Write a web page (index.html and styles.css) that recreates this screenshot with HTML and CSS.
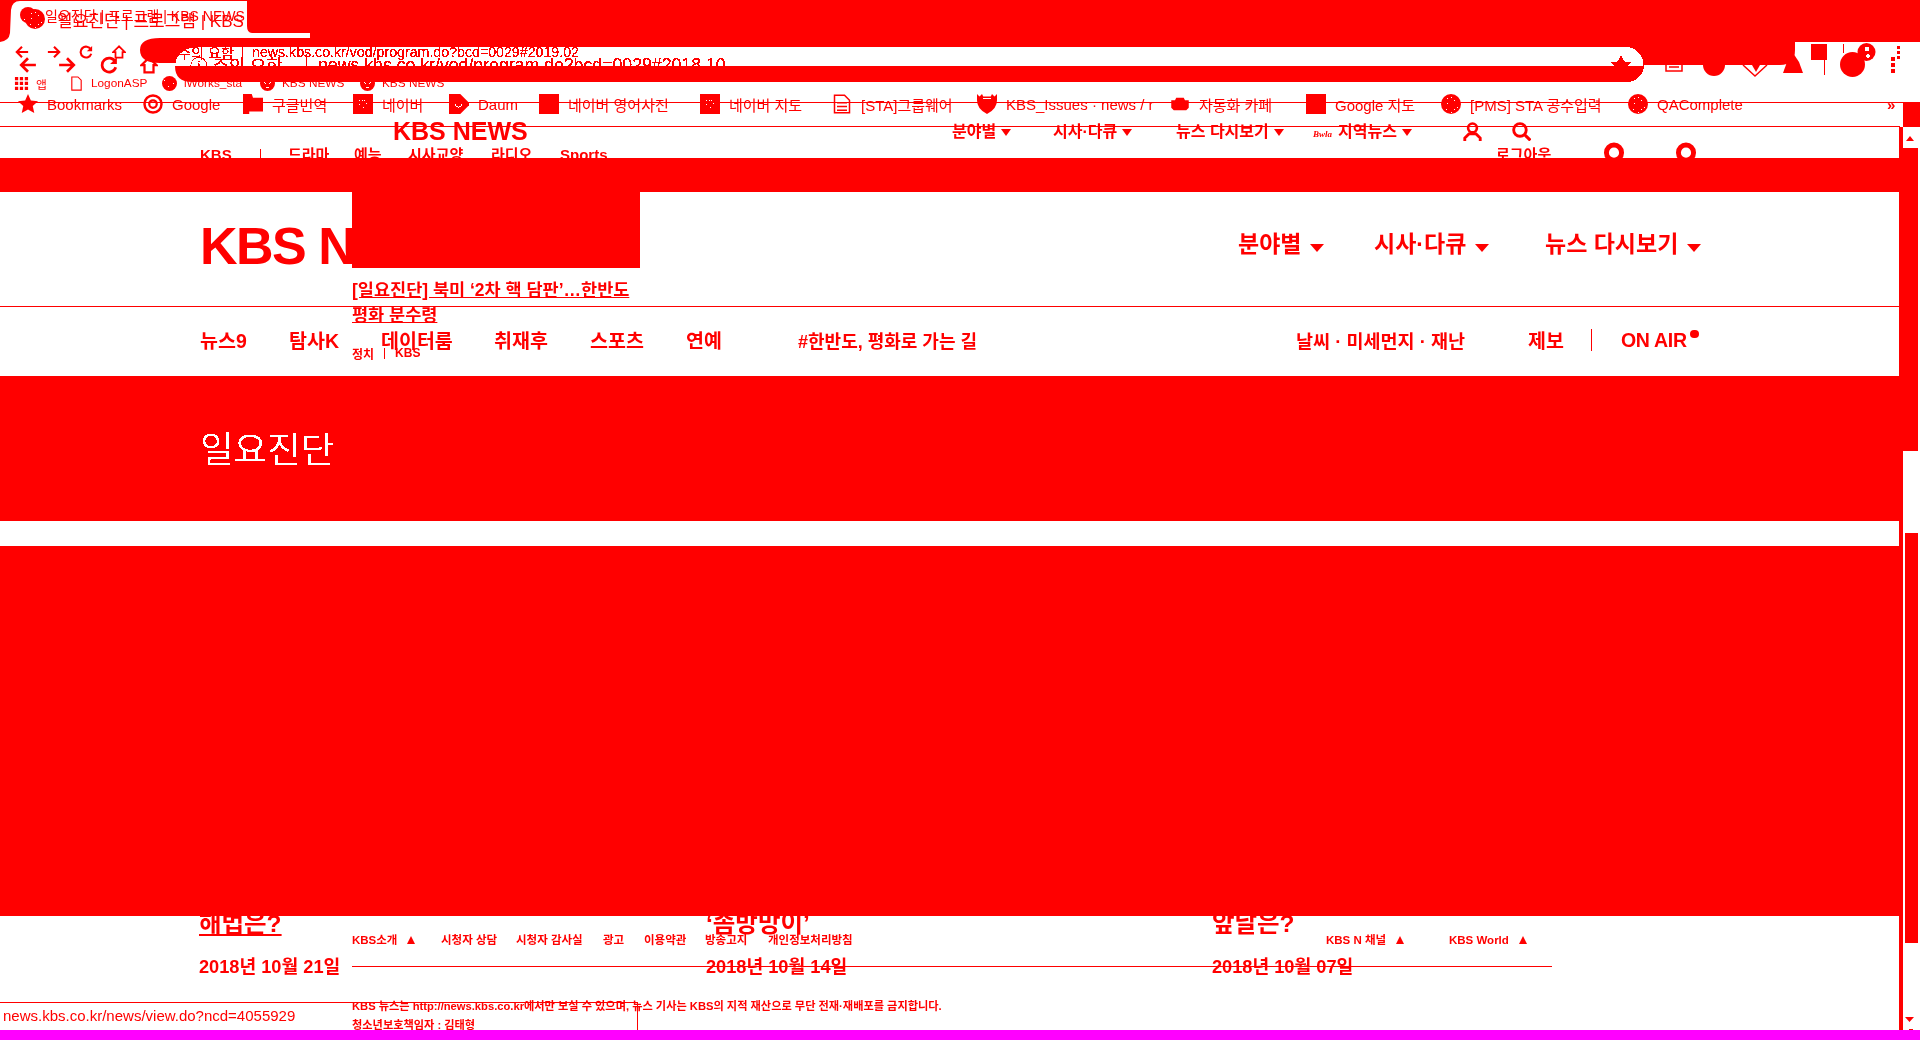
FILE: index.html
```html
<!DOCTYPE html>
<html lang="ko">
<head>
    <meta charset="UTF-8">
    <title>일요진단 | 프로그램 | KBS NEWS</title>
    <link rel="stylesheet" href="styles.css">
</head>
<body>
<svg class="defs" width="0" height="0">
    <filter id="binary" color-interpolation-filters="sRGB" x="0" y="0" width="100%" height="100%">
        <feComponentTransfer>
            <feFuncG type="discrete" tableValues="0 0 1"/>
            <feFuncB type="discrete" tableValues="0 0 1"/>
        </feComponentTransfer>
    </filter>
    <symbol id="i-back" viewBox="0 0 16 16"><path d="M15 8H2M8 2L2 8l6 6" fill="none" stroke="#f00" stroke-width="2.4"/></symbol>
    <symbol id="i-fwd" viewBox="0 0 16 16"><path d="M1 8h13M8 2l6 6-6 6" fill="none" stroke="#f00" stroke-width="2.4"/></symbol>
    <symbol id="i-reload" viewBox="0 0 16 16"><path d="M13.5 5A6.2 6.2 0 1 0 14 10" fill="none" stroke="#f00" stroke-width="2.4"/><path d="M15 1v6H9z" fill="#f00"/></symbol>
    <symbol id="i-home" viewBox="0 0 16 16"><path d="M8 1.5L1.5 8H4v6.5h8V8h2.5z" fill="none" stroke="#f00" stroke-width="2"/></symbol>
    <symbol id="i-apps" viewBox="0 0 16 16"><path d="M1 1h3.5v3.5H1zM6.2 1h3.5v3.5H6.2zM11.5 1H15v3.5h-3.5zM1 6.2h3.5v3.5H1zM6.2 6.2h3.5v3.5H6.2zM11.5 6.2H15v3.5h-3.5zM1 11.5h3.5V15H1zM6.2 11.5h3.5V15H6.2zM11.5 11.5H15V15h-3.5z" fill="#f00"/></symbol>
    <symbol id="i-file" viewBox="0 0 16 16"><path d="M3 1h6.5L13 4.5V15H3z" fill="none" stroke="#f00" stroke-width="1.2"/></symbol>
    <symbol id="i-doc" viewBox="0 0 16 16"><path d="M2 1h8l4 4v10H2zM4 7h8M4 10h8M4 13h8" fill="none" stroke="#f00" stroke-width="1.2"/></symbol>
    <symbol id="i-star" viewBox="0 0 16 16"><path d="M8 0l2.3 5.2 5.7.6-4.2 3.8 1.2 5.6L8 12.4l-5 2.8 1.2-5.6L0 5.8l5.7-.6z" fill="#f00"/></symbol>
    <symbol id="i-ring" viewBox="0 0 16 16"><circle cx="8" cy="8" r="6.8" fill="none" stroke="#f00" stroke-width="2"/><circle cx="8" cy="8" r="3" fill="none" stroke="#f00" stroke-width="1.8"/></symbol>
    <symbol id="i-folder" viewBox="0 0 16 16"><path d="M0 0h7l1 3h8v11H5v2H0z" fill="#f00"/></symbol>
    <symbol id="i-naver" viewBox="0 0 16 16"><path d="M0 0h16v16H0z" fill="#f00"/><path d="M5 5h6v6H5z" fill="none" stroke="#fff" stroke-dasharray="1 1"/></symbol>
    <symbol id="i-daum" viewBox="0 0 16 16"><path d="M0 0h9l7 7v2l-7 7H0z" fill="#f00"/><path d="M5 8a2.5 2.5 0 0 0 5 0" fill="none" stroke="#fff"/></symbol>
    <symbol id="i-square" viewBox="0 0 16 16"><path d="M0 0h16v16H0z" fill="#f00"/></symbol>
    <symbol id="i-crest" viewBox="0 0 16 16"><path d="M0 5V0l2 2 2-2 1 2h6l1-2 2 2 2-2v5q0 7-8 11Q0 12 0 5z" fill="#f00"/><path d="M5 3.5h6" stroke="#fff"/></symbol>
    <symbol id="i-cup" viewBox="0 0 16 16"><path d="M1 5h3l1-2h6l1 2h3v6l-2 2H3l-2-2z" fill="#f00"/><path d="M2 8h12" stroke="#fff"/></symbol>
    <symbol id="i-globe" viewBox="0 0 16 16"><circle cx="8" cy="8" r="8" fill="#f00"/><path d="M4 6l3 3M12 6L9 9M6 12h4" stroke="#fff"/></symbol>
    <symbol id="i-dotball" viewBox="0 0 16 16"><circle cx="8" cy="8" r="8" fill="#f00"/><path d="M2 5l9-3M2 9l12-5M4 13l10-6M8 15l6-5" stroke="#fff" stroke-dasharray="1 2"/></symbol>
    <symbol id="i-user" viewBox="0 0 16 16"><circle cx="8" cy="5" r="3.7" fill="none" stroke="#f00" stroke-width="2.2"/><path d="M1.5 16v-2.5L5 10h6l3.5 3.5V16" fill="none" stroke="#f00" stroke-width="2.4"/></symbol>
    <symbol id="i-search" viewBox="0 0 16 16"><circle cx="6.7" cy="6.7" r="5.3" fill="none" stroke="#f00" stroke-width="2.4"/><path d="M10.5 10.5L15.5 15.5" stroke="#f00" stroke-width="2.6"/></symbol>
    <symbol id="i-pin" viewBox="0 0 16 16"><circle cx="8" cy="7" r="5.5" fill="none" stroke="#f00" stroke-width="3.6"/></symbol>
</svg>

<div class="stage">
    <!-- silhouette of the browser frame and the scrollbar -->
    <svg class="backdrop" viewBox="0 0 1920 1040" width="1920" height="1040">
        <path fill="#f00" d="M0 0H247V1H20Q12 1 11 10L10 33Q9 41 0 42Z"/>
        <path fill="#f00" d="M160 38H310V33H252Q247 33 247 26V0H1920V42H1795V50Q1795 65 1780 65H1644V82H192Q175 82 175 66V63H160Q140 63 140 50Q140 38 160 38Z"/>
        <path fill="#fff" d="M200 47H1626A17.5 17.5 0 0 1 1643.500 64.500V66H175Q176 47 200 47Z"/>
        <path fill="#fff" d="M1644 66V64.500A17.500 17.500 0 0 1 1626 82H1644Z"/>
        <path fill="#f00" d="M0 102H1903V103H0ZM0 126H1900V127H0ZM1903 102H1920V127H1903ZM0 158H1918V192H0ZM352 192H640V268H352Z"/>
        <path fill="#f00" d="M1899 127H1903V1030H1899ZM1903 148H1918V451H1903ZM1905 533H1918V943H1905Z"/>
        <path fill="#f00" d="M1906 141L1910 136L1914 141ZM1905 1017H1914L1909.500 1022ZM1909 1029H1913V1030H1909Z"/>
        <!-- extension icons under the band -->
        <path fill="none" stroke="#f00" stroke-width="1.500" d="M1666 64V71H1682V64M1669 67H1679"/>
        <path fill="#f00" d="M1703 65H1725A11 11 0 0 1 1703 65Z"/>
        <path fill="none" stroke="#f00" stroke-width="1.500" d="M1743 65L1755 76L1767 65"/>
        <path fill="#f00" d="M1752 65H1760L1756 72Z"/>
        <path fill="#f00" d="M1793 53L1799 62L1803 73H1783L1787 62Z"/>
        <path fill="#f00" d="M1811 44H1827V60H1825V75H1824V60H1811Z"/>
        <path fill="#f00" d="M1843 44H1844V53H1843Z"/>
        <circle fill="#f00" cx="1852.500" cy="64.500" r="12.500"/>
        <circle fill="#f00" cx="1866.500" cy="52" r="9"/>
        <circle fill="#fff" cx="1867" cy="49" r="2.500"/>
        <circle fill="#fff" cx="1868" cy="56" r="2"/>
        <path fill="#f00" d="M1897 46H1900V49H1897ZM1897 51H1900V54H1897ZM1897 56H1900V59H1897ZM1891 57H1895V61H1891ZM1891 63H1895V67H1891ZM1891 69H1895V73H1891Z"/>
    </svg>

    <!-- upper exposure of the page -->
    <div class="view view-a">
        <div class="tab-a"><svg class="ico-fav-a"><use href="#i-dotball"/></svg><span>일요진단 | 프로그램 | KBS NEWS</span></div>
        <div class="tool tool-a">
            <svg><use href="#i-back"/></svg><svg><use href="#i-fwd"/></svg><svg><use href="#i-reload"/></svg><svg><use href="#i-home"/></svg>
            <span class="warn">주의 요함</span><i class="sep"></i><span class="url">news.kbs.co.kr/vod/program.do?bcd=0029#2019.02</span>
        </div>
        <div class="marks marks-a">
            <a><svg><use href="#i-apps"/></svg>앱</a>
            <a><svg><use href="#i-file"/></svg>LogonASP</a>
            <a><svg><use href="#i-dotball"/></svg>iWorks_sta</a>
            <a><svg><use href="#i-globe"/></svg>KBS NEWS</a>
            <a><svg><use href="#i-globe"/></svg>KBS NEWS</a>
        </div>
        <div class="head-a">
            <b class="logo-a">KBS NEWS</b>
            <a>분야별<i class="caret"></i></a>
            <a>시사·다큐<i class="caret"></i></a>
            <a>뉴스 다시보기<i class="caret"></i></a>
            <a><em class="bwla">Bwla</em>지역뉴스<i class="caret"></i></a>
            <svg class="ico-head"><use href="#i-user"/></svg>
            <svg class="ico-head"><use href="#i-search"/></svg>
        </div>
        <div class="sub-a">
            <a>KBS</a><i class="sep"></i><a>드라마</a><a>예능</a><a>시사교양</a><a>라디오</a><a>Sports</a>
            <a>로그아웃</a>
            <svg class="ico-pin"><use href="#i-pin"/></svg>
            <svg class="ico-pin"><use href="#i-pin"/></svg>
        </div>
        <div class="article-a">
            <a class="article-title">[일요진단] 북미 ‘2차 핵 담판’…한반도<br>평화 분수령</a>
            <p class="article-meta"><span>정치</span><i class="sep"></i><span>KBS</span></p>
        </div>
        <div class="foot">
            <div class="foot-links">
                <a>KBS소개<i class="up"></i></a><a>시청자 상담</a><a>시청자 감사실</a><a>광고</a><a>이용약관</a><a>방송고지</a><a>개인정보처리방침</a>
                <a>KBS N 채널<i class="up"></i></a><a>KBS World<i class="up"></i></a>
            </div>
            <p class="copy">KBS 뉴스는 http://news.kbs.co.kr에서만 보실 수 있으며, 뉴스 기사는 KBS의 지적 재산으로 무단 전재·재배포를 금지합니다.</p>
            <p class="copy copy-2">청소년보호책임자 : 김태형</p>
        </div>
    </div>

    <!-- lower exposure of the page -->
    <div class="view view-b">
        <div class="tab-b"><svg class="ico-fav-b"><use href="#i-dotball"/></svg><span>일요진단 | 프로그램 | KBS NEWS</span></div>
        <div class="tool tool-b">
            <svg><use href="#i-back"/></svg><svg><use href="#i-fwd"/></svg><svg><use href="#i-reload"/></svg><svg><use href="#i-home"/></svg>
            <span class="warn">ⓘ 주의 요함</span><i class="sep"></i><span class="url">news.kbs.co.kr/vod/program.do?bcd=0029#2018.10</span>
            <svg class="ico-bookmark"><use href="#i-star"/></svg>
        </div>
        <div class="marks marks-b">
            <a><svg><use href="#i-star"/></svg>Bookmarks</a>
            <a><svg><use href="#i-ring"/></svg>Google</a>
            <a><svg><use href="#i-folder"/></svg>구글번역</a>
            <a><svg><use href="#i-naver"/></svg>네이버</a>
            <a><svg><use href="#i-daum"/></svg>Daum</a>
            <a><svg><use href="#i-square"/></svg>네이버 영어사전</a>
            <a><svg><use href="#i-naver"/></svg>네이버 지도</a>
            <a><svg><use href="#i-doc"/></svg>[STA]그룹웨어</a>
            <a><svg><use href="#i-crest"/></svg>KBS_Issues · news / r</a>
            <a><svg><use href="#i-cup"/></svg>자동화 카페</a>
            <a><svg><use href="#i-square"/></svg>Google 지도</a>
            <a><svg><use href="#i-dotball"/></svg>[PMS] STA 공수입력</a>
            <a><svg><use href="#i-dotball"/></svg>QAComplete</a>
            <a class="more">»</a>
        </div>
        <div class="head-b">
            <b class="logo-b">KBS N</b>
            <a>분야별<i class="caret"></i></a>
            <a>시사·다큐<i class="caret"></i></a>
            <a>뉴스 다시보기<i class="caret"></i></a>
        </div>
        <div class="nav-b">
            <a>뉴스9</a><a>탐사K</a><a>데이터룸</a><a>취재후</a><a>스포츠</a><a>연예</a>
            <a class="nav-tag">#한반도, 평화로 가는 길</a>
            <a>날씨 · 미세먼지 · 재난</a><a>제보</a><i class="sep"></i><a class="onair">ON AIR<i class="dot"></i></a>
        </div>
        <div class="title-band"><h1>일요진단</h1></div>
        <div class="content-band"></div>
        <div class="cards-title">
            <a class="hover">해법은?</a><a>‘솜방망이’</a><a>앞날은?</a>
        </div>
        <div class="cards-date">
            <span>2018년 10월 21일</span><span>2018년 10월 14일</span><span>2018년 10월 07일</span>
        </div>
    </div>

    <div class="bottom">
        <div class="status">news.kbs.co.kr/news/view.do?ncd=4055929</div>
        <div class="strip"></div>
    </div>
</div>
</body>
</html>
```

FILE: styles.css
```css
* { box-sizing: border-box; }

body {
    margin: 0;
    background: #fff;
    color: #f00;
    font-family: "Liberation Sans", "Noto Sans CJK KR", sans-serif;
    overflow: hidden;
}

a { color: inherit; white-space: nowrap; }
em, i { font-style: normal; }
p, h1 { margin: 0; }

.defs { display: block; height: 0; }

.stage {
    display: grid;
    width: 1920px;
    height: 1040px;
    overflow: hidden;
    filter: url(#binary);
}
.stage > * { grid-area: 1 / 1; }
.backdrop { display: block; }

.view { display: flex; flex-direction: column; min-width: 0; }

/* tabs */
.tab-a, .tab-b {
    display: flex;
    align-items: center;
    width: 247px;
    overflow: hidden;
    white-space: nowrap;
}
.tab-a { height: 30px; padding-left: 20px; gap: 9px; font-size: 14px; }
.tab-b { height: 38px; padding-left: 25px; gap: 12px; font-size: 17px; }
.ico-fav-a { width: 16px; height: 16px; flex: none; }
.ico-fav-b { width: 20px; height: 20px; flex: none; }

/* toolbar */
.tool { display: grid; align-items: center; white-space: nowrap; }
.tool-a {
    height: 44px;
    font-size: 14.200px;
    padding-left: 15px;
    grid-template-columns: 32px 32px 33px 66px 64px 10px 1fr;
}
.tool-a svg { width: 14px; height: 14px; }
.tool-b {
    height: 54px;
    font-size: 17.700px;
    padding-left: 19px;
    grid-template-columns: 39px 42px 40px 50px 116px 12px 1293px 20px;
}
.tool-b svg { width: 18px; height: 18px; }
.tool-b .ico-bookmark { width: 20px; height: 20px; }
.sep { display: block; width: 1px; background: #f00; }
.tool .sep { height: 18px; }
.tool-b .sep { height: 22px; }

/* bookmark bars */
.marks { display: grid; align-items: center; white-space: nowrap; }
.marks a { display: flex; align-items: center; }
.marks-a {
    height: 18px;
    padding-left: 14px;
    font-size: 11.800px;
    grid-template-columns: 55px 93px 98px 100px 1fr;
}
.marks-a a { gap: 7px; }
.marks-a svg { width: 15px; height: 15px; flex: none; }
.marks-b {
    height: 24px;
    margin-bottom: 2px;
    padding-left: 18px;
    font-size: 15px;
    grid-template-columns: 125px 100px 110px 96px 90px 161px 132px 145px 193px 136px 135px 187px 259px 1fr;
}
.marks-b a { gap: 9px; }
.marks-b svg { width: 20px; height: 20px; flex: none; }
.more { font-weight: bold; }

/* site header, upper exposure */
.head-a {
    display: grid;
    align-items: center;
    height: 32px;
    margin-top: 23px;
    padding-left: 393px;
    font-size: 16px;
    font-weight: bold;
    grid-template-columns: 559px 101px 123px 137px 150px 49px 40px;
}
.head-a a { margin-bottom: 2px; }
.logo-a { font-size: 25px; }
.caret {
    display: inline-block;
    margin-left: 5px;
    border: 5.500px solid transparent;
    border-top: 7px solid #f00;
    border-bottom: 0;
    vertical-align: 1px;
}
.bwla { font: italic bold 9px "Liberation Serif", serif; margin-right: 6px; }
.ico-head { width: 19px; height: 19px; }

.sub-a {
    display: grid;
    align-items: center;
    height: 14px;
    margin-top: -4px;
    padding-left: 200px;
    font-size: 15px;
    font-weight: bold;
    line-height: 14px;
    grid-template-columns: 60px 28px 66px 54px 83px 69px 936px 107px 72px 22px;
}
.sub-a .sep { height: 12px; }
.ico-pin { width: 22px; height: 24px; margin-top: -1px; }

/* article over the hero, upper exposure */
.article-a { margin-top: 121px; padding-left: 352px; }
.article-title {
    display: block;
    font-size: 17.500px;
    font-weight: bold;
    line-height: 25px;
    text-decoration: underline;
}
.article-meta {
    display: flex;
    align-items: center;
    gap: 10px;
    margin-top: 18px;
    height: 14px;
    font-size: 12px;
    font-weight: bold;
}
.article-meta .sep { height: 11px; }

/* footer, upper exposure */
.foot { width: 1552px; margin-top: 573px; padding-left: 352px; font-size: 11.500px; font-weight: bold; }
.foot-links {
    display: grid;
    padding-bottom: 19px;
    line-height: 14px;
    border-bottom: 1px solid #f00;
    grid-template-columns: 89px 75px 87px 41px 61px 63px 558px 123px 1fr;
}
.up {
    display: inline-block;
    margin-left: 10px;
    border: 4.500px solid transparent;
    border-bottom: 8px solid #f00;
    border-top: 0;
}
.copy { margin-top: 31px; font-size: 11.200px; line-height: 16px; }
.copy-2 { margin-top: 2px; line-height: 18px; }

/* tabs etc., lower exposure */
.view-b { width: 1899px; }

.head-b {
    display: grid;
    align-items: center;
    height: 56px;
    margin-top: 98px;
    padding-left: 200px;
    font-size: 23px;
    font-weight: bold;
    grid-template-columns: 1038px 136px 171px 1fr;
}
.head-b a { margin-bottom: 8px; }
.logo-b { font-size: 52px; letter-spacing: -1.500px; }
.head-b .caret { margin-left: 9px; border-width: 7px; border-top-width: 8px; border-bottom: 0; vertical-align: 0; }

.nav-b {
    display: grid;
    align-items: center;
    height: 70px;
    margin-top: 34px;
    padding-bottom: 4px;
    padding-left: 200px;
    border-top: 1px solid #f00;
    font-size: 19.500px;
    font-weight: bold;
    white-space: nowrap;
    grid-template-columns: 89px 92px 113px 96px 96px 112px 498px 232px 63px 30px 1fr;
}
.nav-b > a:nth-child(8) { font-size: 18.500px; }
.nav-b .sep { height: 22px; }
.nav-tag { font-size: 18px; }
.onair { display: inline-flex; align-items: flex-start; margin-top: 1px; font-size: 19.500px; letter-spacing: -.3px; }
.dot { width: 9px; height: 8px; margin-left: 3px; margin-top: 1px; border-radius: 4px; background: #f00; }

.title-band {
    display: flex;
    align-items: center;
    height: 145px;
    padding-left: 200px;
    padding-bottom: 2px;
    background: #f00;
}
h1 { color: #fff; font-size: 36.500px; font-weight: normal; }
.content-band { height: 370px; margin-top: 25px; background: #f00; }

.cards-title {
    display: grid;
    margin-top: -6px;
    padding-left: 199px;
    font-size: 24.500px;
    font-weight: bold;
    line-height: 27px;
    grid-template-columns: 507px 506px 1fr;
}
.cards-title .hover { justify-self: start; text-decoration: underline; }
.cards-date {
    display: grid;
    margin-top: 18px;
    padding-left: 199px;
    font-size: 18.200px;
    font-weight: bold;
    line-height: 24px;
    grid-template-columns: 507px 506px 1fr;
}

/* status bubble and the strip below the window */
.bottom { align-self: end; }
.status {
    width: 638px;
    height: 28px;
    padding-left: 3px;
    border-top: 1px solid #f00;
    border-right: 1px solid #f00;
    font-size: 15px;
    line-height: 25px;
}
.strip { height: 10px; background: #f0f; }
```
